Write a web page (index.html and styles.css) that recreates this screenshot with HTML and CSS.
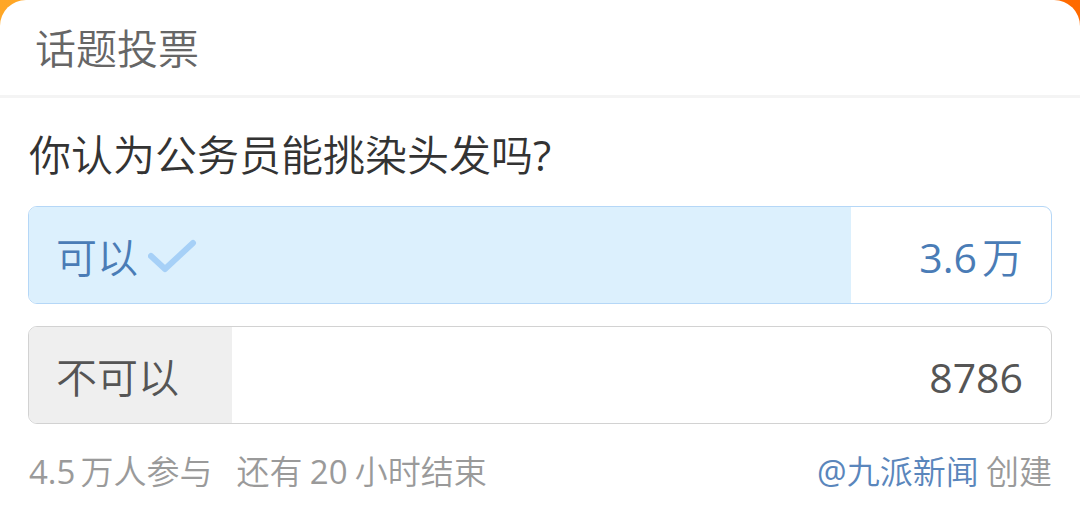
FILE: index.html
```html
<!DOCTYPE html>
<html lang="zh-CN">

<head>
    <meta charset="UTF-8">
    <meta name="viewport" content="width=device-width, initial-scale=1.0">
    <title>话题投票</title>
    <link rel="stylesheet" href="styles.css">
</head>

<body>
    <div class="vote_card">
        <!-- header -->
        <div class="vote_title">话题投票</div>

        <div class="vote_body">
            <div class="question">你认为公务员能挑染头发吗<span class="num">?</span></div>

            <!-- options -->
            <div class="option picked">
                <div class="option_fill" style="width: 80.4%"></div>
                <div class="option_name">
                    可以
                    <svg class="check" width="50" height="40" viewBox="0 0 50 40">
                        <path d="M3 19 L17 32 L45 6" fill="none" stroke="#a6d0f7" stroke-width="6"
                            stroke-linecap="round" stroke-linejoin="round" />
                    </svg>
                </div>
                <div class="option_count"><span class="num">3.6</span><span class="unit">万</span></div>
            </div>

            <div class="option">
                <div class="option_fill" style="width: 19.9%"></div>
                <div class="option_name">不可以</div>
                <div class="option_count"><span class="num">8786</span></div>
            </div>

            <!-- footer -->
            <div class="vote_foot">
                <div class="foot_info">
                    <span><span class="num">4.5</span><span class="unit">万人参与</span></span>
                    <span>还有 <span class="num">20</span> 小时结束</span>
                </div>
                <div class="foot_author">
                    <span class="author"><span class="num">@</span>九派新闻</span> 创建
                </div>
            </div>
        </div>
    </div>
</body>

</html>
```

FILE: styles.css
```css
body {
    margin: 0;
    width: 1080px;
    height: 512px;
    overflow: hidden;
    background: linear-gradient(90deg, #ffa726, #ff6a00);
    font-family: "Noto Sans CJK SC", sans-serif;
    font-weight: 350;
}

.num {
    font-family: "Open Sans", "Noto Sans CJK SC", sans-serif;
    font-weight: 400;
}

.unit {
    margin-left: 5px;
}

.vote_card {
    background: #fff;
    border-radius: 26px 26px 0 0;
    height: 512px;
}

.vote_title {
    height: 95px;
    line-height: 92px;
    padding-left: 35px;
    font-size: 41px;
    color: #666;
    border-bottom: 3px solid #f4f4f4;
}

.vote_body {
    padding: 0 28px;
}

.question {
    height: 108px;
    line-height: 110px;
    font-size: 42px;
    color: #333;
    padding-left: 1px;
}

.option {
    position: relative;
    display: flex;
    justify-content: space-between;
    align-items: center;
    height: 96px;
    border: 1px solid #d2d2d2;
    border-radius: 9px;
    overflow: hidden;
    margin-bottom: 22px;
    font-size: 41px;
    color: #555;
}

.option_fill {
    position: absolute;
    left: 0;
    top: 0;
    bottom: 0;
    background: #efefef;
}

.picked {
    border-color: #b5d7f7;
    color: #4a7cb6;
}

.picked .option_fill {
    background: #dcf0fd;
}

.option_name {
    position: relative;
    display: flex;
    align-items: center;
    gap: 10px;
    padding-left: 27px;
}

.check {
    margin-top: 4px;
}

.option_count {
    position: relative;
    padding-right: 28px;
}

.vote_foot {
    display: flex;
    justify-content: space-between;
    align-items: center;
    height: 48px;
    font-size: 33px;
    color: #9a9a9a;
}

.foot_info {
    display: flex;
    gap: 24px;
    padding-left: 1px;
}

.author {
    color: #5a86bc;
}
```
